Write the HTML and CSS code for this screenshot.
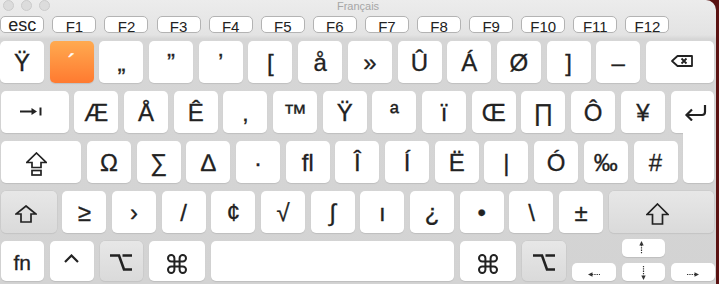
FILE: index.html
```html
<!DOCTYPE html>
<html>
<head>
<meta charset="utf-8">
<link rel="stylesheet" href="styles.css">
</head>
<body>
<div class="window">
  <div class="titlebar">
    <div class="lights"><span class="light"></span><span class="light"></span><span class="light"></span></div>
    <div class="title">Français</div>
    <div></div>
  </div>
  <div class="frow">
    <div class="fkey esc">esc</div>
    <div class="fkey">F1</div><div class="fkey">F2</div><div class="fkey">F3</div><div class="fkey">F4</div>
    <div class="fkey">F5</div><div class="fkey">F6</div><div class="fkey">F7</div><div class="fkey">F8</div>
    <div class="fkey">F9</div><div class="fkey">F10</div><div class="fkey">F11</div><div class="fkey">F12</div>
  </div>
  <div class="keys">
    <div class="row r1">
      <div class="k">Ÿ</div>
      <div class="k orange">´</div>
      <div class="k">„</div>
      <div class="k">”</div>
      <div class="k">’</div>
      <div class="k">[</div>
      <div class="k">å</div>
      <div class="k">»</div>
      <div class="k">Û</div>
      <div class="k">Á</div>
      <div class="k">Ø</div>
      <div class="k">]</div>
      <div class="k">–</div>
      <div class="k icon del"><svg width="22" height="12" viewBox="0 0 22 12"><path d="M1 6 L6.5 1 H21 V11 H6.5 Z" fill="none" stroke="#222" stroke-width="1.8" stroke-linejoin="round"/><path d="M10.5 3.5 L15.5 8.5 M15.5 3.5 L10.5 8.5" stroke="#222" stroke-width="1.8"/></svg></div>
    </div>
    <div class="row r2">
      <div class="k icon tab"><svg width="23" height="9" viewBox="0 0 23 9"><path d="M0 4.5 H13" stroke="#222" stroke-width="2"/><path d="M11.5 1 L17 4.5 L11.5 8 Z" fill="#222"/><path d="M20.5 0.5 V8.5" stroke="#222" stroke-width="2"/></svg></div>
      <div class="k">Æ</div>
      <div class="k">Å</div>
      <div class="k">Ê</div>
      <div class="k">‚</div>
      <div class="k">™</div>
      <div class="k">Ÿ</div>
      <div class="k">ª</div>
      <div class="k">ï</div>
      <div class="k">Œ</div>
      <div class="k">∏</div>
      <div class="k">Ô</div>
      <div class="k">¥</div>
      <div class="k icon ret-top"><svg width="23" height="17" viewBox="0 0 23 17"><path d="M21 1 V8 Q21 11 18 11 H3.5" fill="none" stroke="#222" stroke-width="2.2"/><path d="M8 5.5 L2.5 11 L8 16.5" fill="none" stroke="#222" stroke-width="2.2"/></svg></div>
    </div>
    <div class="row r3">
      <div class="k icon caps"><svg width="21" height="24" viewBox="0 0 21 24"><path d="M10.5 1 L20.2 10.5 H15 V15.5 H6 V10.5 H0.8 Z" fill="none" stroke="#222" stroke-width="1.7"/><rect x="6" y="18.5" width="9" height="4.5" fill="none" stroke="#222" stroke-width="1.7"/></svg></div>
      <div class="k">Ω</div>
      <div class="k">∑</div>
      <div class="k">∆</div>
      <div class="k">·</div>
      <div class="k">ﬂ</div>
      <div class="k">Î</div>
      <div class="k">Í</div>
      <div class="k">Ë</div>
      <div class="k">|</div>
      <div class="k">Ó</div>
      <div class="k">‰</div>
      <div class="k">#</div>
      <div class="k ret-low"></div>
    </div>
    <div class="row r4">
      <div class="k mod icon lshift"><svg width="22" height="18" viewBox="0 0 22 18"><path d="M11 1 L21 9 H16 V17 H6 V9 H1 Z" fill="none" stroke="#222" stroke-width="1.7"/></svg></div>
      <div class="k">≥</div>
      <div class="k">›</div>
      <div class="k">/</div>
      <div class="k">¢</div>
      <div class="k">√</div>
      <div class="k">∫</div>
      <div class="k">ı</div>
      <div class="k">¿</div>
      <div class="k">•</div>
      <div class="k">\</div>
      <div class="k">±</div>
      <div class="k mod icon rshift"><svg width="23" height="22" viewBox="0 0 23 22"><path d="M11.5 1 L22 11.5 H16.5 V21 H6.5 V11.5 H1 Z" fill="none" stroke="#222" stroke-width="1.7"/></svg></div>
    </div>
    <div class="row r5">
      <div class="k fn">fn</div>
      <div class="k icon ctrl"><svg width="15" height="9" viewBox="0 0 15 9"><path d="M1 8 L7.5 1.5 L14 8" fill="none" stroke="#222" stroke-width="2.2"/></svg></div>
      <div class="k mod icon opt"><svg width="22" height="19" viewBox="0 0 22 19"><path d="M0 2.5 H9 L14 16.5 H22 M12.5 2.5 H22" fill="none" stroke="#222" stroke-width="2.6"/></svg></div>
      <div class="k icon cmd"><svg width="20" height="20" viewBox="0 0 20 20"><path d="M7.4 7.4 V4.2 A3.2 3.2 0 1 0 4.2 7.4 H15.8 A3.2 3.2 0 1 0 12.6 4.2 V15.8 A3.2 3.2 0 1 0 15.8 12.6 H4.2 A3.2 3.2 0 1 0 7.4 15.8 Z" fill="none" stroke="#222" stroke-width="2"/></svg></div>
      <div class="k space"></div>
      <div class="k icon cmd"><svg width="20" height="20" viewBox="0 0 20 20"><path d="M7.4 7.4 V4.2 A3.2 3.2 0 1 0 4.2 7.4 H15.8 A3.2 3.2 0 1 0 12.6 4.2 V15.8 A3.2 3.2 0 1 0 15.8 12.6 H4.2 A3.2 3.2 0 1 0 7.4 15.8 Z" fill="none" stroke="#222" stroke-width="2"/></svg></div>
      <div class="k mod icon opt"><svg width="22" height="19" viewBox="0 0 22 19"><path d="M0 2.5 H9 L14 16.5 H22 M12.5 2.5 H22" fill="none" stroke="#222" stroke-width="2.6"/></svg></div>
      <div class="k icon arrow aleft"><svg width="12" height="5" viewBox="0 0 12 5"><path d="M4 2.5 H12" stroke="#333" stroke-width="1.2" stroke-dasharray="1.3 1"/><path d="M4.5 0.3 L0 2.5 L4.5 4.7 Z" fill="#333"/></svg></div>
      <div class="arrows">
        <div class="k icon arrow aup"><svg width="5" height="13" viewBox="0 0 5 13"><path d="M2.5 4 V13" stroke="#333" stroke-width="1.2" stroke-dasharray="1.3 1"/><path d="M0.3 4.5 L2.5 0 L4.7 4.5 Z" fill="#333"/></svg></div>
        <div class="k icon arrow adown"><svg width="5" height="14" viewBox="0 0 5 14"><path d="M2.5 0 V9.5" stroke="#333" stroke-width="1.2" stroke-dasharray="1.3 1"/><path d="M0.3 9.5 L2.5 14 L4.7 9.5 Z" fill="#333"/></svg></div>
      </div>
      <div class="k icon arrow aright"><svg width="12" height="5" viewBox="0 0 12 5"><path d="M0 2.5 H8" stroke="#333" stroke-width="1.2" stroke-dasharray="1.3 1"/><path d="M7.5 0.3 L12 2.5 L7.5 4.7 Z" fill="#333"/></svg></div>
    </div>
  </div>
</div>
</body>
</html>
```
FILE: styles.css
```css
* { box-sizing: border-box; }
html, body { margin: 0; padding: 0; }
body {
  width: 719px;
  height: 284px;
  overflow: hidden;
  background: #5a1212;
  font-family: "Liberation Sans", Arial, sans-serif;
  color: #222;
}
.window {
  width: 716px;
  height: 284px;
  overflow: hidden;
  border-top-right-radius: 10px;
  background: linear-gradient(to bottom, #ececec 0, #e3e3e3 35px, #d6d6d6 39px, #d3d3d3 100%);
}
.titlebar {
  height: 16px;
  display: grid;
  grid-template-columns: 1fr auto 1fr;
}
.lights {
  display: flex;
  gap: 7px;
  padding-left: 3px;
}
.light {
  width: 11px;
  height: 11px;
  margin-top: -0.5px;
  border-radius: 50%;
  background: #dcdcdc;
  border: 1px solid #cbcbcb;
}
.title {
  font-size: 11px;
  line-height: 12px;
  color: #a6a6a6;
}
.frow {
  display: flex;
  gap: 8.1px;
  padding-left: 0.3px;
  height: 17px;
}
.fkey {
  width: 44px;
  height: 17px;
  flex: none;
  border: 1px solid #b3b3b3;
  border-radius: 5px;
  background: #fff;
  font-size: 15px;
  line-height: 14px;
  padding-top: 2.5px;
  text-align: center;
  color: #222;
}
.fkey.esc {
  font-size: 18px;
  padding-top: 0.5px;
}
.keys {
  padding-top: 8px;
  display: flex;
  flex-direction: column;
  gap: 8.5px;
}
.row {
  display: flex;
  gap: 5.7px;
  height: 41.5px;
  padding-left: 0.5px;
}
.r1 { padding-left: 0; }
.k {
  flex: none;
  width: 44px;
  background: #fff;
  border-radius: 5px;
  box-shadow: 0 1px 1px rgba(0, 0, 0, 0.1);
  display: flex;
  justify-content: center;
  align-items: flex-start;
  padding-top: 7.9px;
  font-size: 24px;
  line-height: normal;
  color: #222;
  -webkit-text-stroke: 0.3px #222;
}
.k.mod {
  background: linear-gradient(to bottom, #e7e7e7, #dadada);
  box-shadow: 0 0 0 0.5px #c6c6c6, 0 1px 1px rgba(0, 0, 0, 0.08);
}
.k.orange {
  background: linear-gradient(to bottom, #ffaa50, #ff7a30);
  color: #fff;
  -webkit-text-stroke: 0.3px #fff;
}
.k svg { display: block; }
.k.del { width: 67.9px; padding-top: 14px; padding-left: 5px; }
.k.tab { width: 68.1px; padding-top: 15.5px; padding-right: 5.5px; }
.k.ret-top {
  width: 43.3px;
  border-radius: 5px 5px 0 5px;
  padding-top: 13px;
  padding-left: 7px;
}
.k.caps { width: 80.8px; padding-top: 10.5px; padding-right: 8px; }
.k.ret-low {
  width: 30.6px;
  height: 50px;
  margin-top: -8.5px;
  border-radius: 0 0 5px 5px;
}
.k.lshift { width: 56.1px; padding-top: 14px; padding-right: 4.4px; }
.k.rshift { width: 105px; padding-top: 11.5px; padding-right: 8px; }
.r5 { gap: 6px; height: 40px; }
.r5 .k { width: 43.5px; }
.k.fn { font-size: 21px; padding-top: 10.3px; }
.k.ctrl { padding-top: 13px; }
.k.opt { padding-top: 11.5px; }
.r5 .k.cmd { width: 56px; padding-top: 13px; }
.r5 .k.space { width: 243px; }
.r5 .k.aleft { width: 44px; }
.k.arrow {
  height: 18px;
  align-self: flex-end;
  align-items: center;
  padding-top: 0;
  padding-bottom: 0;
}
.k.aleft, .k.aright { padding-top: 4.5px; }
.arrows {
  display: flex;
  flex-direction: column;
  gap: 6.5px;
  width: 43.5px;
  margin-top: -2.5px;
}
.arrows .k { width: 43.5px; }
.k.aup { padding-right: 3px; }
.k.adown { padding-top: 1px; }
```
